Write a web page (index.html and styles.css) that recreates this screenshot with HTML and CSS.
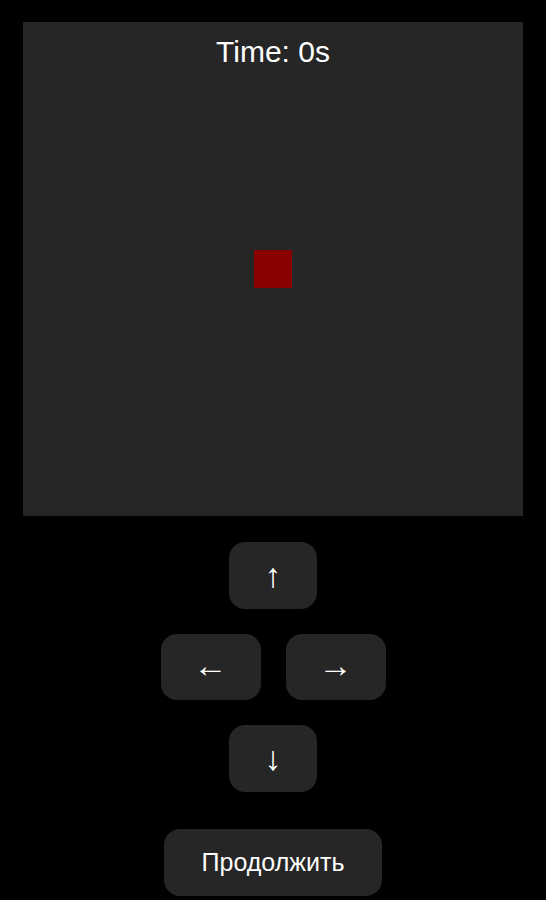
FILE: index.html
```html
<!DOCTYPE html>
<html lang="ru">
<head>
<meta charset="utf-8">
<title>Game</title>
<link rel="stylesheet" href="styles.css">
</head>
<body>
<div class="page">
  <div class="board">
    <div class="time">Time: 0s</div>
    <div class="player"></div>
  </div>
  <div class="controls">
    <button class="btn btn-v">↑</button>
    <div class="row">
      <button class="btn btn-h">←</button>
      <button class="btn btn-h">→</button>
    </div>
    <button class="btn btn-v">↓</button>
  </div>
  <button class="btn btn-continue">Продолжить</button>
</div>
</body>
</html>
```
FILE: styles.css
```css
html, body {
  margin: 0;
  padding: 0;
  background: #000;
}
body {
  font-family: "Liberation Sans", Arial, sans-serif;
  color: #fff;
}
.page {
  display: flex;
  flex-direction: column;
  align-items: center;
  padding-top: 22px;
}
.board {
  position: relative;
  width: 500px;
  height: 494px;
  background: #262626;
  display: grid;
  place-items: center;
}
.time {
  position: absolute;
  top: 13px;
  left: 0;
  right: 0;
  text-align: center;
  font-size: 30px;
  line-height: 34px;
}
.player {
  width: 38px;
  height: 38px;
  background: #8b0000;
}
.controls {
  display: flex;
  flex-direction: column;
  align-items: center;
  gap: 25px;
  margin-top: 26px;
}
.row {
  display: flex;
  gap: 25px;
}
.btn {
  border: none;
  background: #262626;
  color: #fff;
  font-family: "Liberation Sans", Arial, sans-serif;
  border-radius: 16px;
  padding: 0;
  display: flex;
  align-items: center;
  justify-content: center;
  cursor: pointer;
}
.btn-v {
  width: 88px;
  height: 67px;
  font-size: 34px;
}
.btn-h {
  width: 100px;
  height: 66px;
  font-size: 34px;
  padding-bottom: 3px;
}
.btn-continue {
  margin-top: 37px;
  width: 218px;
  height: 67px;
  font-size: 25px;
}
```
